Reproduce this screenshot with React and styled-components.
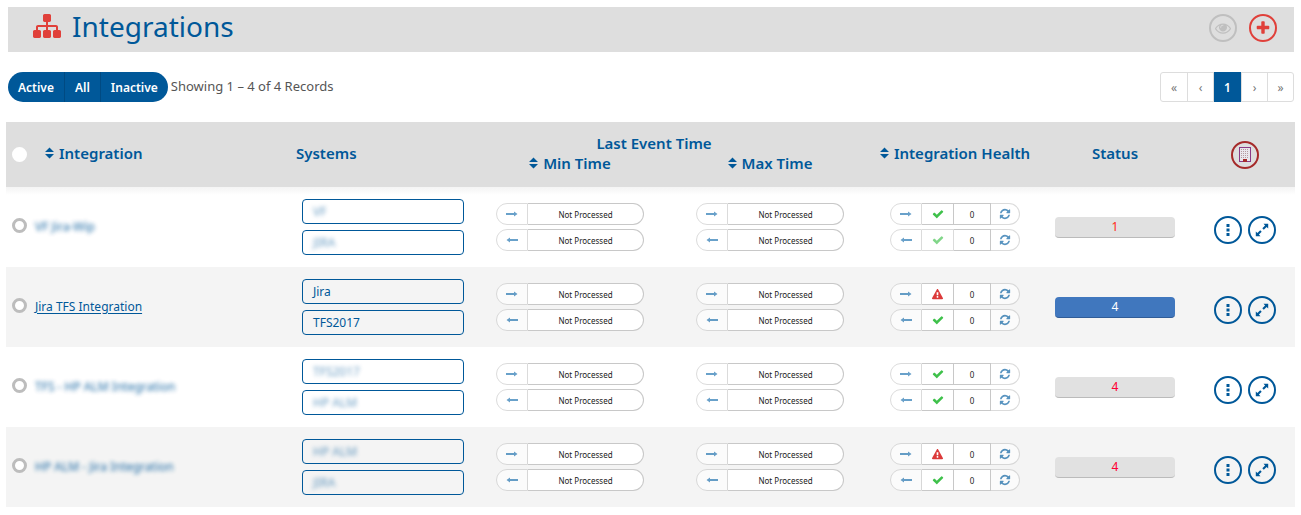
import React from "react";
import styled, { createGlobalStyle, css } from "styled-components";

const blue = "#005899";
const red = "#e0403a";
const grey = "#dedede";

const GlobalStyle = createGlobalStyle`
  *, *::before, *::after { box-sizing: border-box; }
  body { margin: 0; background: #fff; }
  body, button, input { font-family: "Noto Sans", "Open Sans", sans-serif; }
`;

const Page = styled.main`
  padding: 7px 6px 8px;
  font-size: 12px;
  color: #555;
`;

const PageHeader = styled.header`
  display: flex;
  align-items: flex-start;
  justify-content: space-between;
  height: 45px;
  margin: 0 1px 0 2px;
  padding: 1px 17px 0 25px;
  background: ${grey};
`;

const Title = styled.h1`
  display: flex;
  align-items: center;
  gap: 11px;
  margin: 0;
  font-size: 28px;
  line-height: 36px;
  font-weight: 400;
  color: ${blue};
`;

const HeaderActions = styled.div`
  display: flex;
  gap: 12px;
  padding-top: 6px;
`;

const RoundButton = styled.button`
  display: inline-flex;
  align-items: center;
  justify-content: center;
  flex: none;
  width: 28px;
  height: 28px;
  padding: 0;
  border: 2px solid currentColor;
  border-radius: 50%;
  background: transparent;
  color: ${(p) => p.$color || blue};
`;

const Toolbar = styled.div`
  display: flex;
  align-items: center;
  gap: 3px;
  height: 30px;
  margin: 20px 1px 20px 2px;
`;

const FilterGroup = styled.div`
  display: flex;
  height: 30px;
  border-radius: 15px;
  overflow: hidden;
`;

const FilterButton = styled.button`
  padding: 0 10px;
  border: 0;
  background: ${blue};
  color: #fff;
  font-size: 12px;
  font-weight: 600;
  & + & { border-left: 1px solid #004a82; }
`;

const RecordCount = styled.span`
  flex: 1;
  font-size: 13px;
  line-height: 16px;
  padding-bottom: 2px;
`;

const Pager = styled.nav`
  display: flex;
  height: 30px;
  border: 1px solid #ddd;
  border-radius: 3px;
`;

const PageLink = styled.a`
  display: flex;
  align-items: center;
  justify-content: center;
  width: 26px;
  color: #777;
  font-size: 12px;
  text-decoration: none;
  & + & { border-left: 1px solid #ddd; }
  ${(p) => p.$current && css`
    width: 28px;
    margin: -1px 0;
    background: ${blue};
    color: #fff;
    font-weight: 600;
  `}
`;

const Table = styled.table`
  width: 100%;
  table-layout: fixed;
  border-collapse: collapse;
`;

const Col = styled.col`
  width: ${(p) => (p.$w ? `${p.$w}px` : "auto")};
`;

const Head = styled.thead`
  background: ${grey};
  color: ${blue};
`;

const HeadCell = styled.th`
  padding: ${(p) => p.$pad || "0 0 3px"};
  text-align: ${(p) => p.$align || "center"};
  vertical-align: ${(p) => p.$valign || "middle"};
  font-size: 15px;
  line-height: 20px;
  font-weight: 600;
  white-space: nowrap;
`;

const SortButton = styled.button`
  display: inline-flex;
  align-items: center;
  gap: 5px;
  padding: 0;
  border: 0;
  background: none;
  color: inherit;
  font-size: 15px;
  line-height: 20px;
  font-weight: 600;
`;

const Row = styled.tr`
  height: 80px;
  background: #fff;
  &:nth-child(even) { background: #f4f4f4; }
  &:first-child { background: linear-gradient(#f4f4f4, #fff 8px); }
`;

const Cell = styled.td`
  padding: ${(p) => p.$pad || "0"};
  text-align: ${(p) => p.$align || "left"};
  vertical-align: middle;
`;

const Check = styled.input`
  appearance: none;
  display: block;
  width: 15px;
  height: 15px;
  margin: 0 0 0 6px;
  border: 3px solid ${(p) => (p.$plain ? "#fff" : "#bdbdbd")};
  border-radius: 50%;
  background: #fff;
`;

const hidden = css`
  filter: blur(2px);
  text-decoration: none;
`;

const NameLink = styled.a`
  font-size: 12px;
  line-height: 16px;
  color: ${blue};
  text-decoration: underline;
  text-underline-offset: 2px;
  ${(p) => p.$hidden && hidden}
  ${(p) => p.$hidden && css`opacity: 0.9;`}
`;

const SystemList = styled.div`
  display: flex;
  flex-direction: column;
  gap: 6px;
  width: 162px;
  margin-left: 12px;
`;

const SystemBox = styled.div`
  height: 25px;
  padding: 0 10px;
  border: 1px solid ${blue};
  border-radius: 4px;
  font-size: 12px;
  line-height: 24px;
  color: ${blue};
`;

const SystemName = styled.span`
  ${(p) => p.$hidden && hidden}
  ${(p) => p.$hidden && css`opacity: 0.6;`}
`;

const ChipStack = styled.div`
  display: inline-flex;
  flex-direction: column;
  gap: 4px;
  vertical-align: middle;
`;

const Chip = styled.div`
  display: flex;
  height: 22px;
`;

const ChipPart = styled.div`
  display: flex;
  align-items: center;
  justify-content: center;
  width: ${(p) => p.$w}px;
  border: 1px solid #c8c8c8;
  background: #fff;
  color: #222;
  font-size: 8px;
  opacity: ${(p) => (p.$faded ? 0.65 : 1)};
  & + & { border-left-width: ${(p) => (p.$joined ? "0" : "1px")}; }
  &:first-child { border-radius: 11px 0 0 11px; }
  &:last-child { border-radius: 0 11px 11px 0; }
`;

const ChipButton = styled(ChipPart).attrs({ as: "button", type: "button" })`
  padding: 0;
`;

const Status = styled.div`
  width: 120px;
  height: 21px;
  margin: 0 auto;
  border-radius: 4px;
  border-bottom: 1px solid ${(p) => (p.$active ? "#305c97" : "#bbb")};
  background: ${(p) => (p.$active ? "#4077be" : "#e1e1e1")};
  color: ${(p) => p.$color};
  font-size: 12px;
  line-height: 20px;
  text-align: center;
`;

const RowActions = styled.div`
  display: flex;
  gap: 6px;
  padding: 6px 0 0 24px;
`;

const paths = {
  sitemap:
    "M1792 1248v320q0 40-28 68t-68 28h-320q-40 0-68-28t-28-68v-320q0-40 28-68t68-28h96v-192h-512v192h96q40 0 68 28t28 68v320q0 40-28 68t-68 28h-320q-40 0-68-28t-28-68v-320q0-40 28-68t68-28h96v-192h-512v192h96q40 0 68 28t28 68v320q0 40-28 68t-68 28h-320q-40 0-68-28t-28-68v-320q0-40 28-68t68-28h96v-192q0-52 38-90t90-38h512v-192h-96q-40 0-68-28t-28-68v-320q0-40 28-68t68-28h320q40 0 68 28t28 68v320q0 40-28 68t-68 28h-96v192h512q52 0 90 38t38 90v192h96q40 0 68 28t28 68z",
  plus:
    "M1600 736v192q0 40-28 68t-68 28h-416v416q0 40-28 68t-68 28h-192q-40 0-68-28t-28-68v-416h-416q-40 0-68-28t-28-68v-192q0-40 28-68t68-28h416v-416q0-40 28-68t68-28h192q40 0 68 28t28 68v416h416q40 0 68 28t28 68z",
  check:
    "M1671 566q0 40-28 68l-724 724-136 136q-28 28-68 28t-68-28l-136-136-362-362q-28-28-28-68t28-68l136-136q28-28 68-28t68 28l294 295 656-657q28-28 68-28t68 28l136 136q28 28 28 68z",
  refresh:
    "M1639 1056q0 5-1 7-64 268-268 434.5t-478 166.5q-146 0-282.5-55t-243.5-157l-129 129q-19 19-45 19t-45-19-19-45v-448q0-26 19-45t45-19h448q26 0 45 19t19 45-19 45l-137 137q71 66 161 102t187 36q134 0 250-65t186-179q11-17 53-117 8-23 30-23h192q13 0 22.5 9.5t9.5 22.5zm25-800v448q0 26-19 45t-45 19h-448q-26 0-45-19t-19-45 19-45l138-138q-148-137-349-137-134 0-250 65t-186 179q-11 17-53 117-8 23-30 23h-199q-13 0-22.5-9.5t-9.5-22.5v-7q65-268 270-434.5t480-166.5q146 0 284 55.5t245 156.5l130-129q19-19 45-19t45 19 19 45z",
  eye:
    "M1664 960q-152-236-381-353 61 104 61 225 0 185-131.5 316.5t-316.5 131.5-316.5-131.5-131.5-316.5q0-121 61-225-229 117-381 353 133 205 333.5 326.5t434.5 121.5 434.5-121.5 333.5-326.5zm-720-384q0-20-14-34t-34-14q-125 0-214.5 89.5t-89.5 214.5q0 20 14 34t34 14 34-14 14-34q0-86 61-147t147-61q20 0 34-14t14-34zm848 384q0 34-20 69-140 230-376.5 368.5t-499.5 138.5-499.5-139-376.5-368q-20-35-20-69t20-69q140-229 376.5-368t499.5-139 499.5 139 376.5 368q20 35 20 69z",
  warning:
    "M1024 1375v-190q0-14-9.5-23.5t-22.5-9.5h-192q-13 0-22.5 9.5t-9.5 23.5v190q0 14 9.5 23.5t22.5 9.5h192q13 0 22.5-9.5t9.5-23.5zm-2-374l18-459q0-12-10-19-13-11-24-11h-220q-11 0-24 11-10 7-10 21l17 457q0 10 10 16.5t24 6.5h185q14 0 23.5-6.5t10.5-16.5zm-14-934l768 1408q35 63-2 126-17 29-46.5 46t-63.5 17h-1536q-34 0-63.5-17t-46.5-46q-37-63-2-126l768-1408q17-31 47-49t65-18 65 18 47 49z",
};

const Glyph = ({ name, size, color = "currentColor" }) => (
  <svg width={size} height={size} viewBox="0 0 1792 1792" fill={color} aria-hidden="true">
    <path d={paths[name]} />
  </svg>
);

const Arrow = ({ back }) => (
  <svg width="12" height="8" viewBox="0 0 12 8" fill="#1a6fae" aria-hidden="true">
    <path d={back ? "M12 3H4V1.500L0.500 4 4 6.500V5h8z" : "M0 3h8V1.500L11.500 4 8 6.500V5H0z"} />
  </svg>
);

const SortIcon = () => (
  <svg width="9" height="12" viewBox="0 0 9 12" fill={blue} aria-hidden="true">
    <path d="M4.500 0.500L9 5H0zM4.500 11.500L0 7h9z" />
  </svg>
);

const Building = () => (
  <svg width="12" height="15" viewBox="0 0 12 15" aria-hidden="true">
    <rect x="0.500" y="0.500" width="11" height="14" fill="#e9e6ec" stroke="#8b3a86" />
    <path d="M2.500 2v10M4.500 2v10M6.500 2v10M8.500 2v10" stroke="#b59aa0" strokeDasharray="1 1" />
    <path d="M4 15v-3h4v3z" fill="#a52a2a" />
  </svg>
);

const Dots = () => (
  <svg width="4" height="12" viewBox="0 0 4 12" fill={blue} aria-hidden="true">
    <rect x="0.500" width="3" height="3" />
    <rect x="0.500" y="4.500" width="3" height="3" />
    <rect x="0.500" y="9" width="3" height="3" />
  </svg>
);

const Expand = () => (
  <svg width="14" height="14" viewBox="0 0 14 14" fill={blue} aria-hidden="true">
    <path d="M8.500 0.800h4.700v4.700l-1.600-1.600-2.800 2.800-1.500-1.500 2.800-2.800zM5.500 13.200H0.800V8.500l1.600 1.600 2.800-2.800 1.500 1.500-2.800 2.800z" />
  </svg>
);

const TimeChips = () => (
  <ChipStack>
    {[false, true].map((back) => (
      <Chip key={String(back)}>
        <ChipPart $w={32} $faded><Arrow back={back} /></ChipPart>
        <ChipPart $w={116}>Not Processed</ChipPart>
      </Chip>
    ))}
  </ChipStack>
);

const HealthChips = ({ health }) => (
  <ChipStack>
    {health.map((state, i) => (
      <Chip key={i}>
        <ChipPart $w={32} $faded><Arrow back={i === 1} /></ChipPart>
        <ChipPart $w={32} $faded={state === "idle"}>
          {state === "error"
            ? <Glyph name="warning" size={11} color="#dc3a3a" />
            : <Glyph name="check" size={12} color="#3fc14b" />}
        </ChipPart>
        <ChipPart $w={37}>0</ChipPart>
        <ChipButton $w={29} $faded $joined aria-label="Refresh">
          <Glyph name="refresh" size={12} color="#005c9f" />
        </ChipButton>
      </Chip>
    ))}
  </ChipStack>
);

const rows = [
  { name: "VF Jira-Wip", hidden: true, systems: ["VF", "JIRA"], health: ["ok", "idle"], status: 1, color: "#ff2a14" },
  { name: "Jira TFS Integration", systems: ["Jira", "TFS2017"], health: ["error", "ok"], status: 4, color: "#fff", active: true },
  { name: "TFS - HP ALM Integration", hidden: true, systems: ["TFS2017", "HP ALM"], health: ["ok", "ok"], status: 4, color: "#ff0033" },
  { name: "HP ALM - Jira Integration", hidden: true, systems: ["HP ALM", "JIRA"], health: ["error", "ok"], status: 4, color: "#ff0033" },
];

const Sortable = ({ children }) => (
  <SortButton type="button"><SortIcon />{children}</SortButton>
);

export default function App() {
  return (
    <>
      <GlobalStyle />
      <Page>
        <PageHeader>
          <Title><Glyph name="sitemap" size={28} color={red} />Integrations</Title>
          <HeaderActions>
            <RoundButton $color="#bfbfbf" aria-label="View"><Glyph name="eye" size={16} /></RoundButton>
            <RoundButton $color={red} aria-label="Add integration"><Glyph name="plus" size={16} /></RoundButton>
          </HeaderActions>
        </PageHeader>

        <Toolbar>
          <FilterGroup>
            <FilterButton>Active</FilterButton>
            <FilterButton>All</FilterButton>
            <FilterButton>Inactive</FilterButton>
          </FilterGroup>
          <RecordCount>Showing 1 – 4 of 4 Records</RecordCount>
          <Pager aria-label="Pages">
            <PageLink href="#first">«</PageLink>
            <PageLink href="#previous">‹</PageLink>
            <PageLink href="#1" $current>1</PageLink>
            <PageLink href="#next">›</PageLink>
            <PageLink href="#last">»</PageLink>
          </Pager>
        </Toolbar>

        <Table>
          <colgroup>
            <Col $w={29} /><Col /><Col $w={180} /><Col $w={200} /><Col $w={200} />
            <Col $w={170} /><Col $w={150} /><Col $w={105} />
          </colgroup>
          <Head>
            <tr>
              <HeadCell rowSpan={2} $pad="0"><Check type="checkbox" $plain aria-label="Select all" /></HeadCell>
              <HeadCell rowSpan={2} $align="left" $pad="0 0 3px 10px"><Sortable>Integration</Sortable></HeadCell>
              <HeadCell rowSpan={2} $align="left" $pad="0 0 3px 6px">Systems</HeadCell>
              <HeadCell colSpan={2} $pad="11px 32px 0 0" $valign="bottom">Last Event Time</HeadCell>
              <HeadCell rowSpan={2}><Sortable>Integration Health</Sortable></HeadCell>
              <HeadCell rowSpan={2}>Status</HeadCell>
              <HeadCell rowSpan={2} $pad="0 0 0 5px">
                <RoundButton $color="#a52a2a" aria-label="Company view"><Building /></RoundButton>
              </HeadCell>
            </tr>
            <tr>
              <HeadCell $pad="0 0 14px"><Sortable>Min Time</Sortable></HeadCell>
              <HeadCell $pad="0 0 14px"><Sortable>Max Time</Sortable></HeadCell>
            </tr>
          </Head>
          <tbody>
            {rows.map((row) => (
              <Row key={row.name}>
                <Cell $pad="0 0 3px"><Check type="checkbox" aria-label={`Select ${row.name}`} /></Cell>
                <Cell $pad="0 0 2px"><NameLink href="#integration" $hidden={row.hidden}>{row.name}</NameLink></Cell>
                <Cell>
                  <SystemList>
                    {row.systems.map((s) => (
                      <SystemBox key={s}><SystemName $hidden={row.hidden}>{s}</SystemName></SystemBox>
                    ))}
                  </SystemList>
                </Cell>
                <Cell $align="center"><TimeChips /></Cell>
                <Cell $align="center"><TimeChips /></Cell>
                <Cell $align="center"><HealthChips health={row.health} /></Cell>
                <Cell><Status $active={row.active} $color={row.color}>{row.status}</Status></Cell>
                <Cell>
                  <RowActions>
                    <RoundButton aria-label="More actions"><Dots /></RoundButton>
                    <RoundButton aria-label="Expand"><Expand /></RoundButton>
                  </RowActions>
                </Cell>
              </Row>
            ))}
          </tbody>
        </Table>
      </Page>
    </>
  );
}
